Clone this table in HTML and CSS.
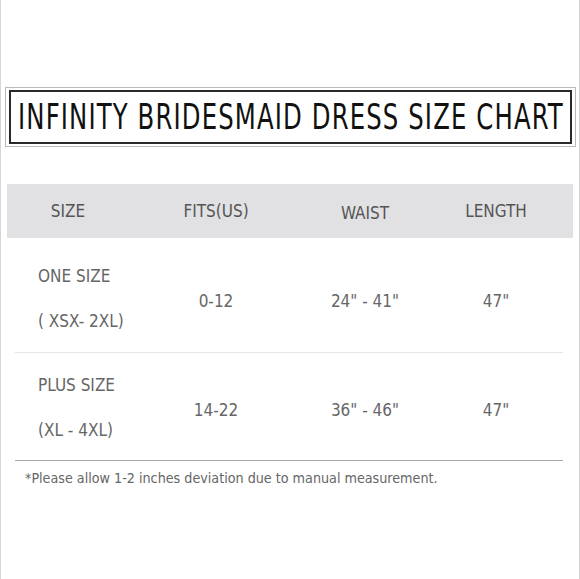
FILE: index.html
```html
<!DOCTYPE html>
<html lang="en">
<head>
<meta charset="utf-8">
<title>Infinity Bridesmaid Dress Size Chart</title>
<link rel="stylesheet" href="styles.css">
</head>
<body>
<div class="page">
  <div class="title-frame">
    <div class="title-inner">
      <h1 class="title">INFINITY BRIDESMAID DRESS SIZE CHART</h1>
    </div>
  </div>

  <div class="head-row">
    <div class="hcell">SIZE</div>
    <div class="hcell">FITS(US)</div>
    <div class="hcell hcell-low">WAIST</div>
    <div class="hcell">LENGTH</div>
  </div>

  <div class="rows">
    <div class="row row-first">
      <div class="size-cell"><div>ONE SIZE</div><div>( XSX- 2XL)</div></div>
      <div class="val">0-12</div>
      <div class="val">24" - 41"</div>
      <div class="val">47"</div>
    </div>
    <div class="row row-last">
      <div class="size-cell"><div>PLUS SIZE</div><div>(XL - 4XL)</div></div>
      <div class="val">14-22</div>
      <div class="val">36" - 46"</div>
      <div class="val">47"</div>
    </div>
    <p class="note">*Please allow 1-2 inches deviation due to manual measurement.</p>
  </div>
</div>
</body>
</html>
```
FILE: styles.css
```css
* { box-sizing: border-box; }
html, body { margin: 0; padding: 0; background: #fff; }
body {
  font-family: "DejaVu Sans Condensed", "Liberation Sans Narrow", "Roboto", sans-serif;
}
.page {
  width: 580px;
  height: 579px;
  border-left: 1px solid #d6d6d6;
  border-right: 1px solid #d6d6d6;
  padding-top: 87px;
  overflow: hidden;
}
.title-frame {
  margin: 0 3px 0 4px;
  border: 1px solid #b9b9b9;
  padding: 2px 3px;
}
.title-inner {
  border: 2px solid #2a2a2a;
  height: 54px;
  display: flex;
  align-items: center;
  justify-content: center;
}
.title {
  margin: 0;
  font-weight: 400;
  font-size: 36px;
  line-height: 40px;
  letter-spacing: 1.5px;
  color: #111;
  white-space: nowrap;
  flex: none;
  transform: scaleX(0.752);
  transform-origin: center;
}
.head-row {
  margin: 37px 6px 0 6px;
  height: 54px;
  background: #e1e1e3;
  display: grid;
  grid-template-columns: 122px 174px 124px 138px 1fr;
  align-items: center;
  color: #555;
  font-size: 17px;
}
.hcell { text-align: center; }
.hcell-low { padding-top: 4px; }
.rows { margin: 0 16px 0 14px; }
.row {
  display: grid;
  grid-template-columns: 122px 158px 140px 122px 1fr;
  align-items: center;
  color: #666;
  font-size: 17px;
}
.row-first {
  padding: 16px 0 8px;
  border-bottom: 1px solid #e6e6e6;
}
.row-last {
  padding: 10px 0 7px;
  border-bottom: 1px solid #a8a8a8;
}
.size-cell {
  padding-left: 23px;
  line-height: 45px;
}
.val { text-align: center; padding-top: 4px; }
.note {
  margin: 7px 0 0;
  padding-left: 10px;
  font-size: 14.2px;
  line-height: 20px;
  color: #666;
}
```
